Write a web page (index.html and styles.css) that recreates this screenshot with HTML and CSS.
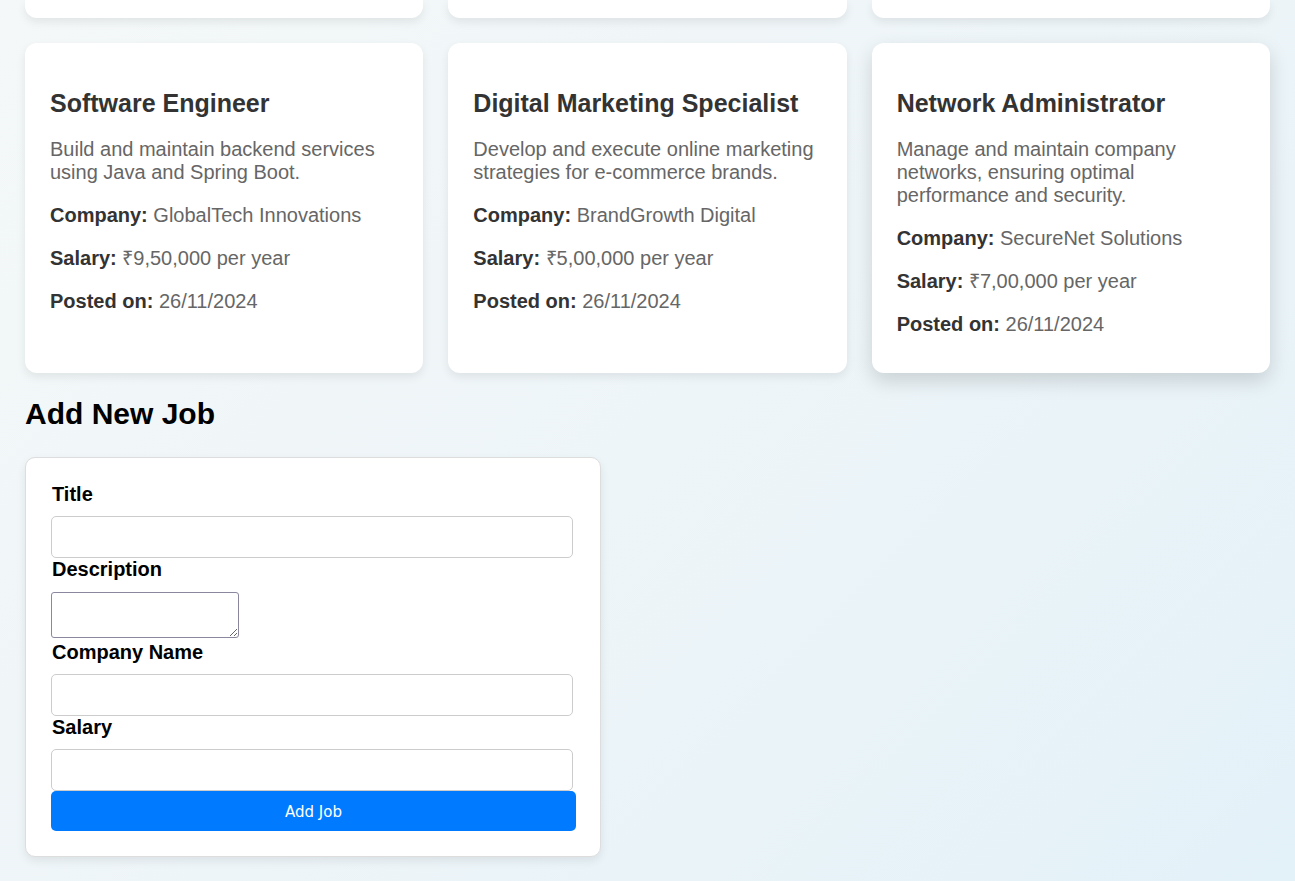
FILE: index.html
```html
<!DOCTYPE html>
<html lang="en">
<head>
<meta charset="utf-8">
<title>Jobs</title>
<link rel="stylesheet" href="styles.css">
</head>
<body>
<main class="page">
  <section class="job-grid">
    <div class="job-card job-card--clipped"></div>
    <div class="job-card job-card--clipped"></div>
    <div class="job-card job-card--clipped"></div>

    <article class="job-card">
      <h3 class="job-title">Software Engineer</h3>
      <p class="job-desc">Build and maintain backend services using Java and Spring Boot.</p>
      <p class="job-meta"><strong>Company:</strong> GlobalTech Innovations</p>
      <p class="job-meta"><strong>Salary:</strong> ₹9,50,000 per year</p>
      <p class="job-meta"><strong>Posted on:</strong> 26/11/2024</p>
    </article>
    <article class="job-card">
      <h3 class="job-title">Digital Marketing Specialist</h3>
      <p class="job-desc">Develop and execute online marketing strategies for e-commerce brands.</p>
      <p class="job-meta"><strong>Company:</strong> BrandGrowth Digital</p>
      <p class="job-meta"><strong>Salary:</strong> ₹5,00,000 per year</p>
      <p class="job-meta"><strong>Posted on:</strong> 26/11/2024</p>
    </article>
    <article class="job-card job-card--hover">
      <h3 class="job-title">Network Administrator</h3>
      <p class="job-desc">Manage and maintain company networks, ensuring optimal performance and security.</p>
      <p class="job-meta"><strong>Company:</strong> SecureNet Solutions</p>
      <p class="job-meta"><strong>Salary:</strong> ₹7,00,000 per year</p>
      <p class="job-meta"><strong>Posted on:</strong> 26/11/2024</p>
    </article>
  </section>

  <h2 class="section-title">Add New Job</h2>

  <form class="job-form">
    <label class="form-label" for="title">Title</label>
    <input class="form-input" id="title" type="text">
    <label class="form-label" for="desc">Description</label>
    <textarea class="form-textarea" id="desc"></textarea>
    <label class="form-label" for="company">Company Name</label>
    <input class="form-input" id="company" type="text">
    <label class="form-label" for="salary">Salary</label>
    <input class="form-input" id="salary" type="text">
    <button class="form-button" type="button">Add Job</button>
  </form>
</main>
</body>
</html>
```

FILE: styles.css
```css
html, body {
  margin: 0;
  padding: 0;
}

body {
  min-height: 881px;
  font-family: "Liberation Sans", Arial, sans-serif;
  font-size: 20px;
  background: linear-gradient(135deg, #f4f8f8 0%, #eef5f8 50%, #e3f1f8 100%);
  color: #000;
}

.page {
  padding: 0 25px 25px;
}

.job-grid {
  display: grid;
  grid-template-columns: repeat(3, 1fr);
  gap: 25px;
}

.job-card {
  background: #fff;
  border-radius: 12px;
  box-shadow: 0 4px 10px rgba(0, 0, 0, 0.08);
  padding: 25px 25px 17px;
}

.job-card--clipped {
  height: 18px;
  padding: 0;
  border-radius: 0 0 12px 12px;
}

.job-card--hover {
  box-shadow: 0 8px 20px rgba(0, 0, 0, 0.15);
}

.job-title {
  font-size: 25px;
  font-weight: bold;
  color: #333;
  margin: 21px 0 20px;
}

.job-desc,
.job-meta {
  margin: 20px 0;
  color: #666;
  line-height: 23px;
}

.job-meta strong {
  color: #333;
}

.section-title {
  font-size: 30px;
  font-weight: bold;
  margin: 23px 0 26px;
  line-height: 35px;
}

.job-form {
  width: 524px;
  background: #fff;
  border: 1px solid #ddd;
  border-radius: 10px;
  box-shadow: 0 4px 10px rgba(0, 0, 0, 0.08);
  padding: 25px;
}

.form-label {
  display: block;
  font-weight: bold;
  line-height: 23px;
  margin: 0 0 10px 1px;
}

.form-input {
  display: block;
  box-sizing: border-box;
  width: 522px;
  height: 42px;
  margin: 0;
  border: 1px solid #ccc;
  border-radius: 5px;
  background: #fff;
  font-size: 16px;
}

.form-textarea {
  display: block;
  box-sizing: border-box;
  width: 188px;
  height: 46px;
  margin: 11px 0 3px;
  border: 1px solid #8a879e;
  border-radius: 3px;
  background: #fff;
}

.form-button {
  display: block;
  width: 525px;
  height: 40px;
  margin: 0;
  border: none;
  border-radius: 5px;
  background: #007bff;
  color: #fff;
  font-family: "DejaVu Sans", sans-serif;
  font-size: 15px;
  padding-top: 2px;
}
```
